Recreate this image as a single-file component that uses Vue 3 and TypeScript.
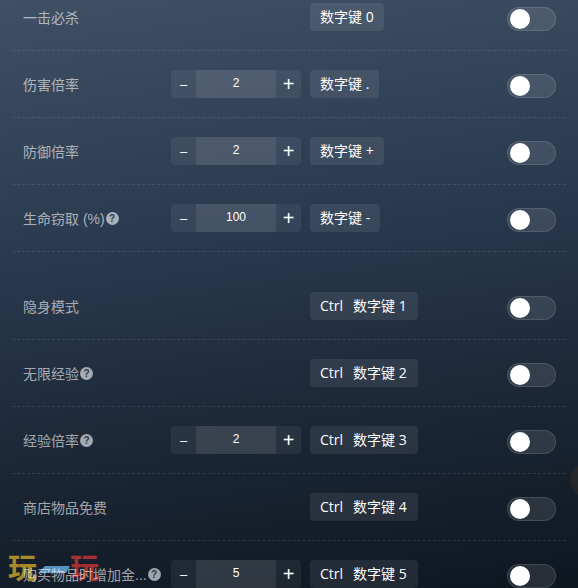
<template>
  <div class="page">
    <span class="edge-btn"></span>

    <div class="logo">
      <span class="logo-char gold">玩</span>
      <svg class="logo-bar" width="32" height="8" viewBox="0 0 32 8">
        <path d="M7 0H32L28 7H0Z" fill="#5a93c2" />
      </svg>
      <span class="logo-char red">玩</span>
    </div>

    <div class="list">
      <section v-for="(group, g) in groups" :key="g" class="group">
        <div v-for="row in group" :key="row.name" class="row">
          <div class="name">
            <span class="name-text">{{ row.name }}</span>
            <span v-if="row.help" class="help">?</span>
          </div>
          <div class="stepper-slot">
            <div v-if="row.value" class="stepper">
              <span class="step minus">–</span>
              <span class="value">{{ row.value }}</span>
              <span class="step plus">+</span>
            </div>
          </div>
          <div class="keys">
            <span v-for="k in row.keys" :key="k" class="key">{{ k }}</span>
          </div>
          <label class="toggle"><span class="knob"></span></label>
        </div>
      </section>
    </div>
  </div>
</template>

<script setup lang="ts">
interface Row {
  name: string;
  help?: boolean;
  value?: string;
  keys: string[];
}

const groups: Row[][] = [
  [
    { name: "一击必杀", keys: ["数字键 0"] },
    { name: "伤害倍率", value: "2", keys: ["数字键 ."] },
    { name: "防御倍率", value: "2", keys: ["数字键 +"] },
    { name: "生命窃取 (%)", help: true, value: "100", keys: ["数字键 -"] },
  ],
  [
    { name: "隐身模式", keys: ["Ctrl", "数字键 1"] },
    { name: "无限经验", help: true, keys: ["Ctrl", "数字键 2"] },
    { name: "经验倍率", help: true, value: "2", keys: ["Ctrl", "数字键 3"] },
    { name: "商店物品免费", keys: ["Ctrl", "数字键 4"] },
    { name: "购买物品时增加金...", help: true, value: "5", keys: ["Ctrl", "数字键 5"] },
  ],
];
</script>

<style>
html,
body {
  margin: 0;
  background: #0f1822;
}
</style>

<style scoped>
.page {
  position: relative;
  width: 578px;
  height: 588px;
  overflow: hidden;
  background: linear-gradient(172deg, #405064 0%, #2a3a4f 38%, #0e1620 100%);
  font-family: "Liberation Sans", "Noto Sans CJK SC", sans-serif;
}

.list {
  position: relative;
  margin: -16px 12px 0;
  width: 554px;
}

.group {
  margin-bottom: 21px;
}

.row {
  display: flex;
  align-items: center;
  height: 66px;
  border-bottom: 1px dashed rgba(255, 255, 255, 0.1);
  padding-left: 11px;
}

.name {
  display: flex;
  align-items: center;
  width: 148px;
  font-size: 14px;
  color: rgba(255, 255, 255, 0.6);
  white-space: nowrap;
}

.help {
  display: inline-flex;
  align-items: center;
  justify-content: center;
  width: 13px;
  height: 13px;
  margin-left: 1px;
  border-radius: 50%;
  background: rgba(255, 255, 255, 0.6);
  color: #2a3a4e;
  font-size: 10px;
  font-weight: 700;
}

.stepper-slot {
  width: 139px;
}

.stepper {
  display: flex;
  width: 130px;
  height: 28px;
  border-radius: 4px;
  background: rgba(255, 255, 255, 0.06);
  color: #fff;
  overflow: hidden;
}

.step {
  width: 25px;
  display: flex;
  align-items: center;
  justify-content: center;
}

.minus {
  font-size: 13px;
}

.plus {
  font-size: 20px;
  padding-top: 1px;
  box-sizing: border-box;
}

.value {
  width: 80px;
  display: flex;
  align-items: center;
  justify-content: center;
  background: rgba(255, 255, 255, 0.08);
  font-size: 12px;
  padding-bottom: 2px;
  box-sizing: border-box;
}

.keys {
  display: flex;
  width: 197px;
}

.key {
  height: 28px;
  line-height: 28px;
  padding: 0 10px;
  background: rgba(255, 255, 255, 0.08);
  color: #fff;
  font-family: "Open Sans", "Noto Sans CJK SC", sans-serif;
  font-size: 14px;
  white-space: nowrap;
}

.key:first-child {
  border-radius: 4px 0 0 4px;
  padding-right: 0;
}

.key:last-child {
  border-radius: 0 4px 4px 0;
  padding-left: 10px;
  padding-right: 11px;
}

.key:only-child {
  border-radius: 4px;
  padding-right: 10px;
}

.toggle {
  position: relative;
  box-sizing: border-box;
  width: 49px;
  height: 24px;
  margin-top: 4px;
  border-radius: 12px;
  border: 1px solid rgba(255, 255, 255, 0.12);
  background: rgba(255, 255, 255, 0.1);
}

.knob {
  position: absolute;
  top: 1px;
  left: 2px;
  width: 20px;
  height: 20px;
  border-radius: 50%;
  background: #fff;
}

.edge-btn {
  position: absolute;
  left: 570px;
  top: 463px;
  width: 34px;
  height: 34px;
  border-radius: 50%;
  background: rgba(60, 50, 40, 0.4);
}

.logo {
  position: absolute;
  left: 8px;
  top: 551px;
  display: flex;
  align-items: flex-start;
}

.logo-char {
  font-size: 29px;
  line-height: 30px;
  font-weight: 700;
  font-family: "Noto Sans CJK SC", sans-serif;
}

.gold {
  color: #a98a2b;
}

.red {
  color: #a5302f;
}

.logo-bar {
  margin: 15px 0 0 1px;
}
</style>
